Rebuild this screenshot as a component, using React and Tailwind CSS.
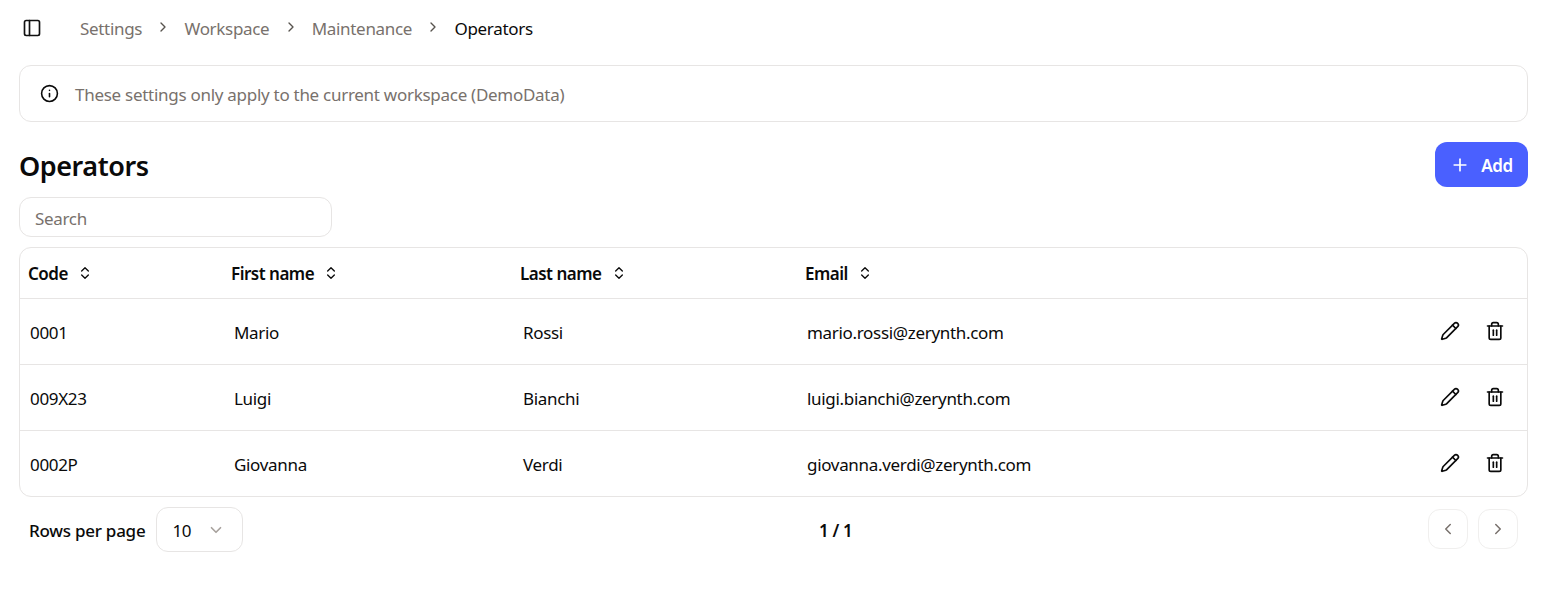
import React from 'react';
import { ChevronDown, ChevronLeft, ChevronRight, ChevronsUpDown, Info, PanelLeft, Pencil, Plus, Trash2 } from 'lucide-react';

const crumbs = ['Settings', 'Workspace', 'Maintenance'];

const operators = [
    { code: '0001', first: 'Mario', last: 'Rossi', email: 'mario.rossi@zerynth.com' },
    { code: '009X23', first: 'Luigi', last: 'Bianchi', email: 'luigi.bianchi@zerynth.com' },
    { code: '0002P', first: 'Giovanna', last: 'Verdi', email: 'giovanna.verdi@zerynth.com' },
];

const columns = [
    { label: 'Code', width: 'w-[203px]' },
    { label: 'First name', width: 'w-[289px]' },
    { label: 'Last name', width: 'w-[285px]' },
    { label: 'Email', width: 'w-auto' },
];

const App = () => {
    return (
        <div className="h-[598px] bg-white pl-[19px] pr-[20px] font-['Noto_Sans',sans-serif] text-[17px] tracking-[-0.32px] text-[#0a0a0a] overflow-hidden">
            {/* Breadcrumb */}
            <div className="flex items-center h-[57px] pl-[3px]">
                <PanelLeft size={20} strokeWidth={2} className="text-[#111] -mt-[1px]" />
                <div className="flex items-center ml-[38px]">
                    {crumbs.map((c) => (
                        <React.Fragment key={c}>
                            <span className="text-[#78716c]">{c}</span>
                            <ChevronRight size={16} className="mx-[13.2px] text-[#57534e] -mt-[3px]" />
                        </React.Fragment>
                    ))}
                    <span>Operators</span>
                </div>
            </div>

            {/* Workspace notice */}
            <div className="mt-[8px] h-[57px] flex items-center gap-[16px] pl-[20px] pr-[21px] rounded-xl border border-[#e7e5e4]">
                <Info size={19} strokeWidth={2} className="text-[#0a0a0a] -mt-[1px]" />
                <span className="text-[#78716c] pt-[2px] tracking-[-0.28px]">These settings only apply to the current workspace (DemoData)</span>
            </div>

            {/* Title */}
            <div className="mt-[20px] flex items-center justify-between h-[45px]">
                <h1 className="text-[27px] font-semibold leading-none mt-[2px] tracking-[-0.45px]">Operators</h1>
                <button className="h-[45px] w-[93px] flex items-center justify-center gap-[11px] rounded-xl bg-[#4a60ff] text-white font-semibold">
                    <Plus size={20} strokeWidth={2} />
                    <span className="pt-[2px]">Add</span>
                </button>
            </div>

            {/* Search */}
            <input
                type="text"
                placeholder="Search"
                className="mt-[10px] block w-[313px] h-[40px] px-[15px] pt-[2px] rounded-xl border border-[#e7e5e4] outline-none placeholder-[#78716c]"
            />

            {/* Table */}
            <div className="mt-[10px] rounded-xl border border-[#e7e5e4] overflow-hidden">
                <table className="w-full table-fixed border-collapse">
                    <thead>
                        <tr className="h-[50px] border-b border-[#e7e5e4]">
                            {columns.map((col) => (
                                <th key={col.label} className={`${col.width} text-left font-semibold pl-[8px] p-0 tracking-[-0.5px]`}>
                                    <span className="flex items-center gap-[9px] pt-[2px]">
                                        {col.label}
                                        <ChevronsUpDown size={16} strokeWidth={2} className="-mt-[2px]" />
                                    </span>
                                </th>
                            ))}
                            <th className="w-[120px]"></th>
                        </tr>
                    </thead>
                    <tbody>
                        {operators.map((op, i) => (
                            <tr key={op.code} className={`h-[66px] ${i < operators.length - 1 ? 'border-b border-[#e7e5e4]' : ''}`}>
                                <td className="pl-[10px] pt-[3px]">{op.code}</td>
                                <td className="pl-[11px] pt-[3px]">{op.first}</td>
                                <td className="pl-[11px] pt-[3px]">{op.last}</td>
                                <td className="pl-[10px] pt-[3px]">{op.email}</td>
                                <td>
                                    <div className="flex items-center justify-end gap-[25px] pr-[22px]">
                                        <Pencil size={20} strokeWidth={2} />
                                        <Trash2 size={20} strokeWidth={2} />
                                    </div>
                                </td>
                            </tr>
                        ))}
                    </tbody>
                </table>
            </div>

            {/* Pagination */}
            <div className="mt-[10px] h-[45px] flex items-center justify-between pl-[10px] pr-[10px] relative">
                <div className="flex items-center gap-[11px]">
                    <span className="font-medium pt-[2px] tracking-[-0.25px]">Rows per page</span>
                    <div className="w-[87px] h-[45px] flex items-center justify-between pl-[15px] pr-[17px] rounded-xl border border-[#e7e5e4]">
                        <span className="pt-[2px]">10</span>
                        <ChevronDown size={18} strokeWidth={2.25} className="text-[#a8a29e]" />
                    </div>
                </div>
                <span className="font-semibold absolute left-[800px] pt-[2px]">1 / 1</span>
                <div className="flex items-center gap-[10px] -mt-[1px]">
                    <button className="w-[40px] h-[40px] flex items-center justify-center rounded-xl border border-[#f0efee] text-[#78716c]">
                        <ChevronLeft size={18} />
                    </button>
                    <button className="w-[40px] h-[40px] flex items-center justify-center rounded-xl border border-[#f0efee] text-[#78716c]">
                        <ChevronRight size={18} />
                    </button>
                </div>
            </div>
        </div>
    );
};

export default App;
